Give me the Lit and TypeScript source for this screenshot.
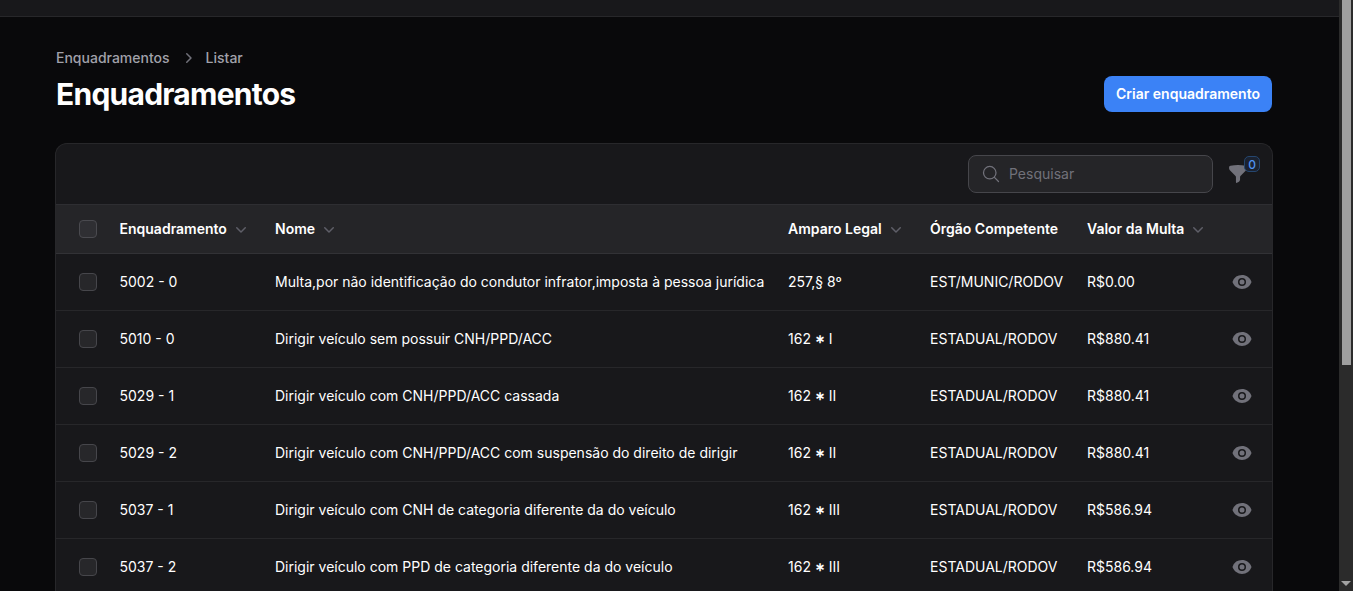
import { LitElement, html, css, svg } from "lit";
import { customElement } from "lit/decorators.js";

const rows = [
  ["5002 - 0", "Multa,por não identificação do condutor infrator,imposta à pessoa jurídica", "257,§ 8º", "EST/MUNIC/RODOV", "R$0.00"],
  ["5010 - 0", "Dirigir veículo sem possuir CNH/PPD/ACC", "162 ∗ I", "ESTADUAL/RODOV", "R$880.41"],
  ["5029 - 1", "Dirigir veículo com CNH/PPD/ACC cassada", "162 ∗ II", "ESTADUAL/RODOV", "R$880.41"],
  ["5029 - 2", "Dirigir veículo com CNH/PPD/ACC com suspensão do direito de dirigir", "162 ∗ II", "ESTADUAL/RODOV", "R$880.41"],
  ["5037 - 1", "Dirigir veículo com CNH de categoria diferente da do veículo", "162 ∗ III", "ESTADUAL/RODOV", "R$586.94"],
  ["5037 - 2", "Dirigir veículo com PPD de categoria diferente da do veículo", "162 ∗ III", "ESTADUAL/RODOV", "R$586.94"],
];

const chevronDown = svg`<path fill-rule="evenodd" clip-rule="evenodd" d="M5.22 8.22a.75.75 0 0 1 1.06 0L10 11.94l3.72-3.72a.75.75 0 1 1 1.06 1.06l-4.25 4.25a.75.75 0 0 1-1.06 0L5.22 9.28a.75.75 0 0 1 0-1.06Z"/>`;

const cell = (c: string) => {
  const parts = c.split("∗");
  return parts.length === 2 ? html`${parts[0]}<span class="ast">∗</span>${parts[1]}` : c;
};

@customElement("app-root")
export class AppRoot extends LitElement {
  static styles = css`
    :host {
      display: flex;
      width: 1353px;
      height: 591px;
      overflow: hidden;
      background: #09090b;
      color: #fff;
      font-family: Inter, "Liberation Sans", sans-serif;
      font-size: 14px;
    }
    .page { flex: 1; min-width: 0; display: flex; flex-direction: column; }
    .topbar { flex: none; height: 16px; background: #18181b; border-bottom: 1px solid #27272a; }
    main { padding: 31px 67px 0 56px; }
    .head { display: flex; justify-content: space-between; align-items: flex-end; }
    .crumbs { display: flex; align-items: center; gap: 10px; height: 20px; color: #a1a1aa; font-weight: 500; line-height: 20px; }
    .crumbs svg { width: 20px; height: 20px; fill: #71717a; margin: 0 -2px; }
    h1 { margin: 8px 0 0; font-size: 30px; line-height: 36px; font-weight: 700; letter-spacing: -0.75px; }
    .btn { height: 36px; padding: 0 12px; border: 0; border-radius: 8px; background: #3b82f6; color: #fff; font: 600 14px/20px Inter, sans-serif; }
    .card { margin: 31px -1px 0; background: #18181b; border: 1px solid #27272a; border-bottom: 0; border-radius: 12px 12px 0 0; overflow: hidden; }
    .toolbar { display: flex; justify-content: flex-end; align-items: center; gap: 16px; height: 60px; padding-right: 23px; }
    .search { display: flex; align-items: center; gap: 8px; width: 245px; height: 38px; padding-left: 12px; box-sizing: border-box; background: #252528; border: 1px solid #46464b; border-radius: 8px; color: #71717a; line-height: 24px; }
    .search svg { width: 20px; height: 20px; stroke: #71717a; fill: none; stroke-width: 1.5; }
    .filter { position: relative; width: 20px; height: 20px; }
    .filter svg { width: 22px; height: 22px; margin: -1px -2px; fill: #71717a; display: block; }
    .badge { position: absolute; top: -8px; left: 15px; width: 16px; height: 16px; box-sizing: border-box; display: flex; align-items: center; justify-content: center; border-radius: 5px; background: #1b2230; border: 1px solid #25466f; color: #4f93ee; font-size: 12px; font-weight: 500; }
    .row { display: grid; grid-template-columns: 63.5px 155.5px 513px 142px 157px 100px 1fr; align-items: center; border-top: 1px solid #27272a; line-height: 20px; }
    .row.header { height: 48px; background: #252528; font-weight: 600; border-top-color: #2e2e32; }
    .row.body { height: 56px; }
    .row.header + .row.body { border-top-color: #323236; }
    .cb { justify-self: end; margin-right: 22.5px; width: 18px; height: 18px; box-sizing: border-box; border: 1px solid #46464b; border-radius: 4px; background: #27272a; }
    .header .cb { background: #2f2f33; border-color: #4a4a4f; }
    .th { display: flex; align-items: center; gap: 4px; white-space: nowrap; }
    .th svg { flex: none; width: 20px; height: 20px; fill: #5f5f68; }
    .td { white-space: nowrap; font-weight: 400; }
    .ast { font-family: "Liberation Sans", sans-serif; font-size: 12px; font-weight: 700; vertical-align: 1px; }
    .eye { justify-self: end; width: 20px; height: 20px; fill: #71717a; margin-right: 20px; }
    .scrollbar { flex: none; width: 14px; background: #2b2b2b; display: flex; flex-direction: column; justify-content: space-between; align-items: center; }
    .thumb { width: 9px; height: 365px; background: #9f9f9f; margin-left: 1px; }
    .arrow { width: 0; height: 0; margin-bottom: 5px; border-left: 5px solid transparent; border-right: 5px solid transparent; border-top: 5px solid #a3a3a3; }
  `;

  render() {
    return html`
      <div class="page">
        <div class="topbar"></div>
        <main>
          <div class="head">
            <div>
              <nav class="crumbs">
                <span>Enquadramentos</span>
                <svg viewBox="0 0 20 20"><path fill-rule="evenodd" clip-rule="evenodd" d="M8.22 5.22a.75.75 0 0 1 1.06 0l4.25 4.25a.75.75 0 0 1 0 1.06l-4.25 4.25a.75.75 0 0 1-1.06-1.06L11.94 10 8.22 6.28a.75.75 0 0 1 0-1.06Z"/></svg>
                <span>Listar</span>
              </nav>
              <h1>Enquadramentos</h1>
            </div>
            <button class="btn">Criar enquadramento</button>
          </div>
          <section class="card">
            <div class="toolbar">
              <div class="search">
                <svg viewBox="0 0 24 24"><path stroke-linecap="round" stroke-linejoin="round" d="m21 21-5.197-5.197m0 0A7.5 7.5 0 1 0 5.196 5.196a7.5 7.5 0 0 0 10.607 10.607Z"/></svg>
                <span>Pesquisar</span>
              </div>
              <div class="filter">
                <svg viewBox="0 0 24 24"><path fill-rule="evenodd" clip-rule="evenodd" d="M3.792 2.938A49.069 49.069 0 0 1 12 2.25c2.797 0 5.54.236 8.209.688a1.857 1.857 0 0 1 1.541 1.836v1.044a3 3 0 0 1-.879 2.121l-6.182 6.182a1.5 1.5 0 0 0-.439 1.061v2.927a3 3 0 0 1-1.658 2.684l-1.757.878A.75.75 0 0 1 9.75 21v-5.818a1.5 1.5 0 0 0-.44-1.06L3.13 7.938a3 3 0 0 1-.879-2.121V4.774c0-.897.64-1.683 1.542-1.836Z"/></svg>
                <span class="badge">0</span>
              </div>
            </div>
            <div class="row header">
              <div class="cb"></div>
              <div class="th">Enquadramento <svg viewBox="0 0 20 20">${chevronDown}</svg></div>
              <div class="th">Nome <svg viewBox="0 0 20 20">${chevronDown}</svg></div>
              <div class="th">Amparo Legal <svg viewBox="0 0 20 20">${chevronDown}</svg></div>
              <div class="th">Órgão Competente</div>
              <div class="th">Valor da Multa <svg viewBox="0 0 20 20">${chevronDown}</svg></div>
            </div>
            ${rows.map(
              (r) => html`
                <div class="row body">
                  <div class="cb"></div>
                  ${r.map((c) => html`<div class="td">${cell(c)}</div>`)}
                  <svg class="eye" viewBox="0 0 20 20"><path d="M10 12.5a2.5 2.5 0 1 0 0-5 2.5 2.5 0 0 0 0 5Z"/><path fill-rule="evenodd" clip-rule="evenodd" d="M.664 10.59a1.651 1.651 0 0 1 0-1.186A10.004 10.004 0 0 1 10 3c4.257 0 7.893 2.66 9.336 6.41.147.381.146.804 0 1.186A10.004 10.004 0 0 1 10 17c-4.257 0-7.893-2.66-9.336-6.41ZM14 10a4 4 0 1 1-8 0 4 4 0 0 1 8 0Z"/></svg>
                </div>
              `
            )}
          </section>
        </main>
      </div>
      <div class="scrollbar">
        <div class="thumb"></div>
        <div class="arrow"></div>
      </div>
    `;
  }
}
